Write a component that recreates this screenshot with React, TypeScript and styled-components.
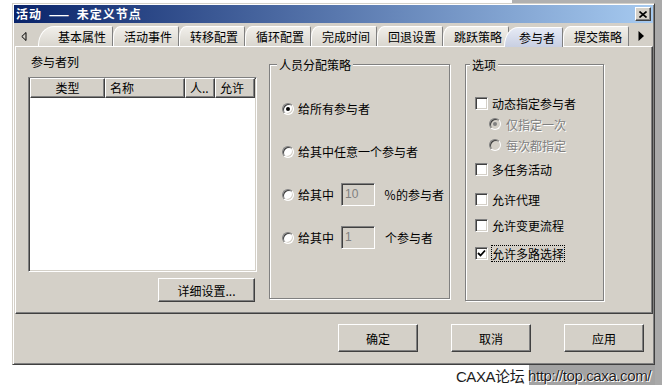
import React from "react";
import styled, { createGlobalStyle } from "styled-components";

const face = "#d4d0c8";
const shadow = "#808080";
const dark = "#404040";

const GlobalStyle = createGlobalStyle`
  html, body { margin: 0; padding: 0; background: #fff; }
  body {
    font-family: "Noto Sans CJK SC", "Liberation Sans", sans-serif;
    font-size: 12px;
    color: #000;
  }
`;

const Screen = styled.div`
  width: 662px;
  height: 385px;
  box-sizing: border-box;
  padding: 3px 0 0 12px;
  display: flex;
  flex-direction: column;
  overflow: hidden;
  background:
    linear-gradient(#a9a9a9, #a9a9a9) right top / 7px 100% no-repeat,
    linear-gradient(#a3a3a3, #a3a3a3) 529px 364px / 133px 21px no-repeat,
    linear-gradient(#b0b0b0, #b0b0b0) 512px 0 / 150px 3px no-repeat,
    #fff;
`;

const Window = styled.div`
  width: 643px;
  height: 362px;
  box-sizing: border-box;
  flex: none;
  border: 1px solid;
  border-color: ${face} ${dark} ${dark} ${face};
  box-shadow: inset 1px 1px #fff, inset -1px -1px ${shadow};
  background: ${face};
  padding: 1px;
  display: flex;
  flex-direction: column;
`;

const TitleBar = styled.div`
  height: 18px;
  flex: none;
  display: flex;
  align-items: center;
  justify-content: space-between;
  padding: 0 2px 0 2px;
  background: linear-gradient(to right, #0a246a, #a6caf0);
  color: #fff;
  font-weight: bold;
  font-size: 12px;
  line-height: 18px;
  white-space: pre;
`;

const TitleText = styled.span`
  letter-spacing: 1px;
  word-spacing: 3px;
`;

const CloseButton = styled.div`
  width: 16px;
  height: 14px;
  box-sizing: border-box;
  border: 1px solid;
  border-color: #fff ${dark} ${dark} #fff;
  box-shadow: inset -1px -1px ${shadow};
  background: ${face};
  display: flex;
  align-items: center;
  justify-content: center;
`;

const TabStrip = styled.div`
  height: 22px;
  flex: none;
  margin-top: 1px;
  display: flex;
  align-items: flex-end;
`;

const ScrollArrow = styled.div<{ $w: number; $pl?: number }>`
  flex: none;
  width: ${(p) => p.$w}px;
  height: 20px;
  box-sizing: border-box;
  display: flex;
  align-items: center;
  justify-content: ${(p) => (p.$pl ? "flex-start" : "center")};
  padding-left: ${(p) => p.$pl ?? 0}px;
`;

const Tab = styled.div<{ $active?: boolean; $first?: boolean }>`
  flex: none;
  box-sizing: border-box;
  height: 20px;
  width: ${(p) => (p.$first ? 75 : p.$active ? 59 : 66)}px;
  margin-left: ${(p) => (p.$active ? -5 : 0)}px;
  margin-bottom: ${(p) => (p.$active ? -1 : 0)}px;
  padding-left: ${(p) => (p.$first ? 19 : p.$active ? 14 : 10)}px;
  display: flex;
  align-items: center;
  white-space: nowrap;
  line-height: 16px;
  border: 1px solid;
  border-bottom: none;
  border-color: #fff ${shadow} transparent #fff;
  border-top-left-radius: ${(p) =>
    p.$first ? "16px 19px" : p.$active ? "14px 19px" : "7px 11px"};
  border-top-right-radius: 2px;
  background: ${(p) =>
    p.$active
      ? "linear-gradient(#e6eaf5, #c8cfe2)"
      : "linear-gradient(#f1efea, #d9d6cf)"};
  position: relative;
  z-index: ${(p) => (p.$active ? 1 : 0)};
`;

const Panel = styled.div`
  height: 268px;
  flex: none;
  box-sizing: border-box;
  margin-left: 1px;
  border: 1px solid;
  border-color: #fff ${dark} ${dark} #fff;
  box-shadow: inset -1px -1px ${shadow};
  display: flex;
  align-items: flex-start;
  padding: 8px 0 0 12px;
`;

const ListColumn = styled.div`
  width: 229px;
  flex: none;
  display: flex;
  flex-direction: column;
`;

const Caption = styled.div`
  line-height: 14px;
  height: 14px;
  margin-bottom: 8px;
  padding-left: 3px;
`;

const ListView = styled.div`
  height: 195px;
  box-sizing: border-box;
  border: 1px solid;
  border-color: ${shadow} #fff #fff ${shadow};
  box-shadow: inset 1px 1px ${dark}, inset -1px -1px ${face};
  background: #fff;
  padding: 0 1px 1px 1px;
`;

const HeaderRow = styled.div`
  display: grid;
  grid-template-columns: 75px 80px 30px 40px;
  height: 20px;
`;

const HeaderCell = styled.div<{ $align?: "center" | "left" }>`
  box-sizing: border-box;
  border: 1px solid;
  border-color: #fff ${dark} ${dark} #fff;
  box-shadow: inset -1px -1px ${shadow};
  background: ${face};
  display: flex;
  align-items: center;
  justify-content: ${(p) => (p.$align === "center" ? "center" : "flex-start")};
  padding-left: ${(p) => (p.$align === "center" ? 0 : 4)}px;
  white-space: nowrap;
  overflow: hidden;
  line-height: 16px;
`;

const PushButton = styled.button<{ $w: number; $h: number }>`
  width: ${(p) => p.$w}px;
  height: ${(p) => p.$h}px;
  box-sizing: border-box;
  border: 1px solid;
  border-color: #fff ${dark} ${dark} #fff;
  box-shadow: inset -1px -1px ${shadow};
  background: ${face};
  font: inherit;
  color: #000;
  padding: 0;
  display: flex;
  align-items: center;
  justify-content: center;
`;

const DetailButton = styled(PushButton)`
  align-self: flex-end;
  margin: 6px 2px 0 0;
`;

const GroupBox = styled.div<{ $w: number; $h: number; $ml: number }>`
  width: ${(p) => p.$w}px;
  height: ${(p) => p.$h}px;
  box-sizing: border-box;
  flex: none;
  margin: 9px 0 0 ${(p) => p.$ml}px;
  border: 1px solid ${shadow};
  box-shadow: inset 1px 1px #fff, 1px 1px 0 #fff;
  display: flex;
  flex-direction: column;
`;

const GroupTitle = styled.div<{ $ml: number }>`
  align-self: flex-start;
  margin: -8px 0 0 ${(p) => p.$ml}px;
  padding: 0 2px;
  line-height: 16px;
  height: 16px;
  background: ${face};
`;

const RadioList = styled.div`
  display: flex;
  flex-direction: column;
  gap: 20px;
  padding-top: 24px;
`;

const ChoiceRow = styled.div<{ $indent: number; $gap?: number }>`
  height: 23px;
  display: flex;
  align-items: center;
  padding-left: ${(p) => p.$indent}px;
  margin-top: ${(p) => p.$gap ?? 0}px;
  white-space: nowrap;
`;

const OptionRow = styled(ChoiceRow)`
  height: 18px;
`;

const Label = styled.span<{ $disabled?: boolean; $ml?: number; $focus?: boolean }>`
  margin-left: ${(p) => p.$ml ?? 4}px;
  line-height: 15px;
  color: ${(p) => (p.$disabled ? shadow : "#000")};
  text-shadow: ${(p) => (p.$disabled ? "1px 1px 0 #fff" : "none")};
  outline: ${(p) => (p.$focus ? "1px dotted #000" : "none")};
  outline-offset: 0;
`;

const Trailing = styled.span<{ $ml?: number }>`
  margin-left: ${(p) => p.$ml ?? 0}px;
`;

const RadioDot = styled.span<{ $checked?: boolean; $disabled?: boolean }>`
  flex: none;
  width: 12px;
  height: 12px;
  box-sizing: border-box;
  border-radius: 50%;
  border: 1px solid;
  border-color: ${shadow} #fff #fff ${shadow};
  box-shadow: inset 1px 1px ${dark}, inset -1px -1px ${face};
  background: ${(p) => (p.$disabled ? face : "#fff")};
  display: flex;
  align-items: center;
  justify-content: center;
  &::after {
    content: "";
    width: 4px;
    height: 4px;
    border-radius: 50%;
    background: ${(p) => (p.$disabled ? shadow : "#000")};
    display: ${(p) => (p.$checked ? "block" : "none")};
  }
`;

const CheckBox = styled.span`
  flex: none;
  width: 13px;
  height: 13px;
  box-sizing: border-box;
  border: 1px solid;
  border-color: ${shadow} #fff #fff ${shadow};
  box-shadow: inset 1px 1px ${dark}, inset -1px -1px ${face};
  background: #fff;
  display: flex;
  align-items: center;
  justify-content: center;
`;

const NumberBox = styled.div`
  width: 34px;
  height: 23px;
  box-sizing: border-box;
  margin: 0 9px 0 7px;
  border: 1px solid;
  border-color: ${shadow} #fff #fff ${shadow};
  box-shadow: inset 1px 1px ${dark}, inset -1px -1px ${face};
  background: ${face};
  color: ${shadow};
  font-family: "Liberation Sans", sans-serif;
  font-size: 12px;
  padding: 3px 0 0 3px;
`;

const OptionsList = styled.div`
  display: flex;
  flex-direction: column;
`;

const ButtonRow = styled.div`
  flex: none;
  display: flex;
  justify-content: flex-end;
  gap: 33px;
  padding: 10px 9px 0 0;
`;

const Footer = styled.div`
  flex: none;
  height: 20px;
  display: flex;
  justify-content: flex-end;
  align-items: center;
  padding-right: 11px;
  font-family: "Liberation Sans", "Noto Sans CJK SC", sans-serif;
  font-size: 15px;
  letter-spacing: -0.4px;
  color: #1c1c1c;
  white-space: pre;
`;

const Url = styled.span`
  text-shadow: 0 0 1px #fff, 1px 1px 0 #fff;
`;

const Check: React.FC<{ checked?: boolean }> = ({ checked }) => (
  <CheckBox>
    {checked && (
      <svg width="9" height="9" viewBox="0 0 9 9">
        <polyline points="1,4 3.5,6.5 8,1.5" fill="none" stroke="#000" strokeWidth="1.8" />
      </svg>
    )}
  </CheckBox>
);

const tabs = ["基本属性", "活动事件", "转移配置", "循环配置", "完成时间", "回退设置", "跳跃策略", "参与者", "提交策略"];

export default function App() {
  return (
    <>
      <GlobalStyle />
      <Screen>
        <Window>
          <TitleBar>
            <TitleText>活动 —— 未定义节点</TitleText>
            <CloseButton>
              <svg width="8" height="7" viewBox="0 0 8 7">
                <path d="M0.5 0.5 L7.5 6.5 M7.5 0.5 L0.5 6.5" stroke="#000" strokeWidth="1.6" />
              </svg>
            </CloseButton>
          </TitleBar>

          <TabStrip>
            <ScrollArrow $w={24} $pl={7}>
              <svg width="6" height="9" viewBox="0 0 6 9">
                <polygon points="5,0.5 0.8,4.5 5,8.5" fill="none" stroke="#000" strokeWidth="1" />
              </svg>
            </ScrollArrow>
            {tabs.map((t, i) => (
              <Tab key={t} $first={i === 0} $active={t === "参与者"}>
                {t}
              </Tab>
            ))}
            <ScrollArrow $w={23}>
              <svg width="6" height="10" viewBox="0 0 6 10">
                <polygon points="0.5,0 6,5 0.5,10" fill="#000" />
              </svg>
            </ScrollArrow>
          </TabStrip>

          <Panel>
            <ListColumn>
              <Caption>参与者列</Caption>
              <ListView>
                <HeaderRow>
                  <HeaderCell $align="center">类型</HeaderCell>
                  <HeaderCell>名称</HeaderCell>
                  <HeaderCell>人..</HeaderCell>
                  <HeaderCell>允许</HeaderCell>
                </HeaderRow>
              </ListView>
              <DetailButton $w={97} $h={24}>详细设置...</DetailButton>
            </ListColumn>

            <GroupBox $w={181} $h={235} $ml={12}>
              <GroupTitle $ml={7}>人员分配策略</GroupTitle>
              <RadioList>
                <ChoiceRow $indent={12}>
                  <RadioDot $checked />
                  <Label>给所有参与者</Label>
                </ChoiceRow>
                <ChoiceRow $indent={12}>
                  <RadioDot />
                  <Label>给其中任意一个参与者</Label>
                </ChoiceRow>
                <ChoiceRow $indent={12}>
                  <RadioDot />
                  <Label>给其中</Label>
                  <NumberBox>10</NumberBox>
                  <Trailing>％的参与者</Trailing>
                </ChoiceRow>
                <ChoiceRow $indent={12}>
                  <RadioDot />
                  <Label>给其中</Label>
                  <NumberBox>1</NumberBox>
                  <Trailing $ml={1}>个参与者</Trailing>
                </ChoiceRow>
              </RadioList>
            </GroupBox>

            <GroupBox $w={139} $h={237} $ml={15}>
              <GroupTitle $ml={4}>选项</GroupTitle>
              <OptionsList>
                <OptionRow $indent={9} $gap={21}>
                  <Check />
                  <Label>动态指定参与者</Label>
                </OptionRow>
                <OptionRow $indent={23} $gap={3}>
                  <RadioDot $checked $disabled />
                  <Label $disabled $ml={5}>仅指定一次</Label>
                </OptionRow>
                <OptionRow $indent={23} $gap={3}>
                  <RadioDot $disabled />
                  <Label $disabled $ml={5}>每次都指定</Label>
                </OptionRow>
                <OptionRow $indent={9} $gap={6}>
                  <Check />
                  <Label>多任务活动</Label>
                </OptionRow>
                <OptionRow $indent={9} $gap={12}>
                  <Check />
                  <Label>允许代理</Label>
                </OptionRow>
                <OptionRow $indent={9} $gap={8}>
                  <Check />
                  <Label>允许变更流程</Label>
                </OptionRow>
                <OptionRow $indent={9} $gap={10}>
                  <Check checked />
                  <Label $focus>允许多路选择</Label>
                </OptionRow>
              </OptionsList>
            </GroupBox>
          </Panel>

          <ButtonRow>
            <PushButton $w={80} $h={28}>确定</PushButton>
            <PushButton $w={80} $h={28}>取消</PushButton>
            <PushButton $w={80} $h={28}>应用</PushButton>
          </ButtonRow>
        </Window>
        <Footer>
          CAXA论坛 <Url>http://top.caxa.com/</Url>
        </Footer>
      </Screen>
    </>
  );
}
